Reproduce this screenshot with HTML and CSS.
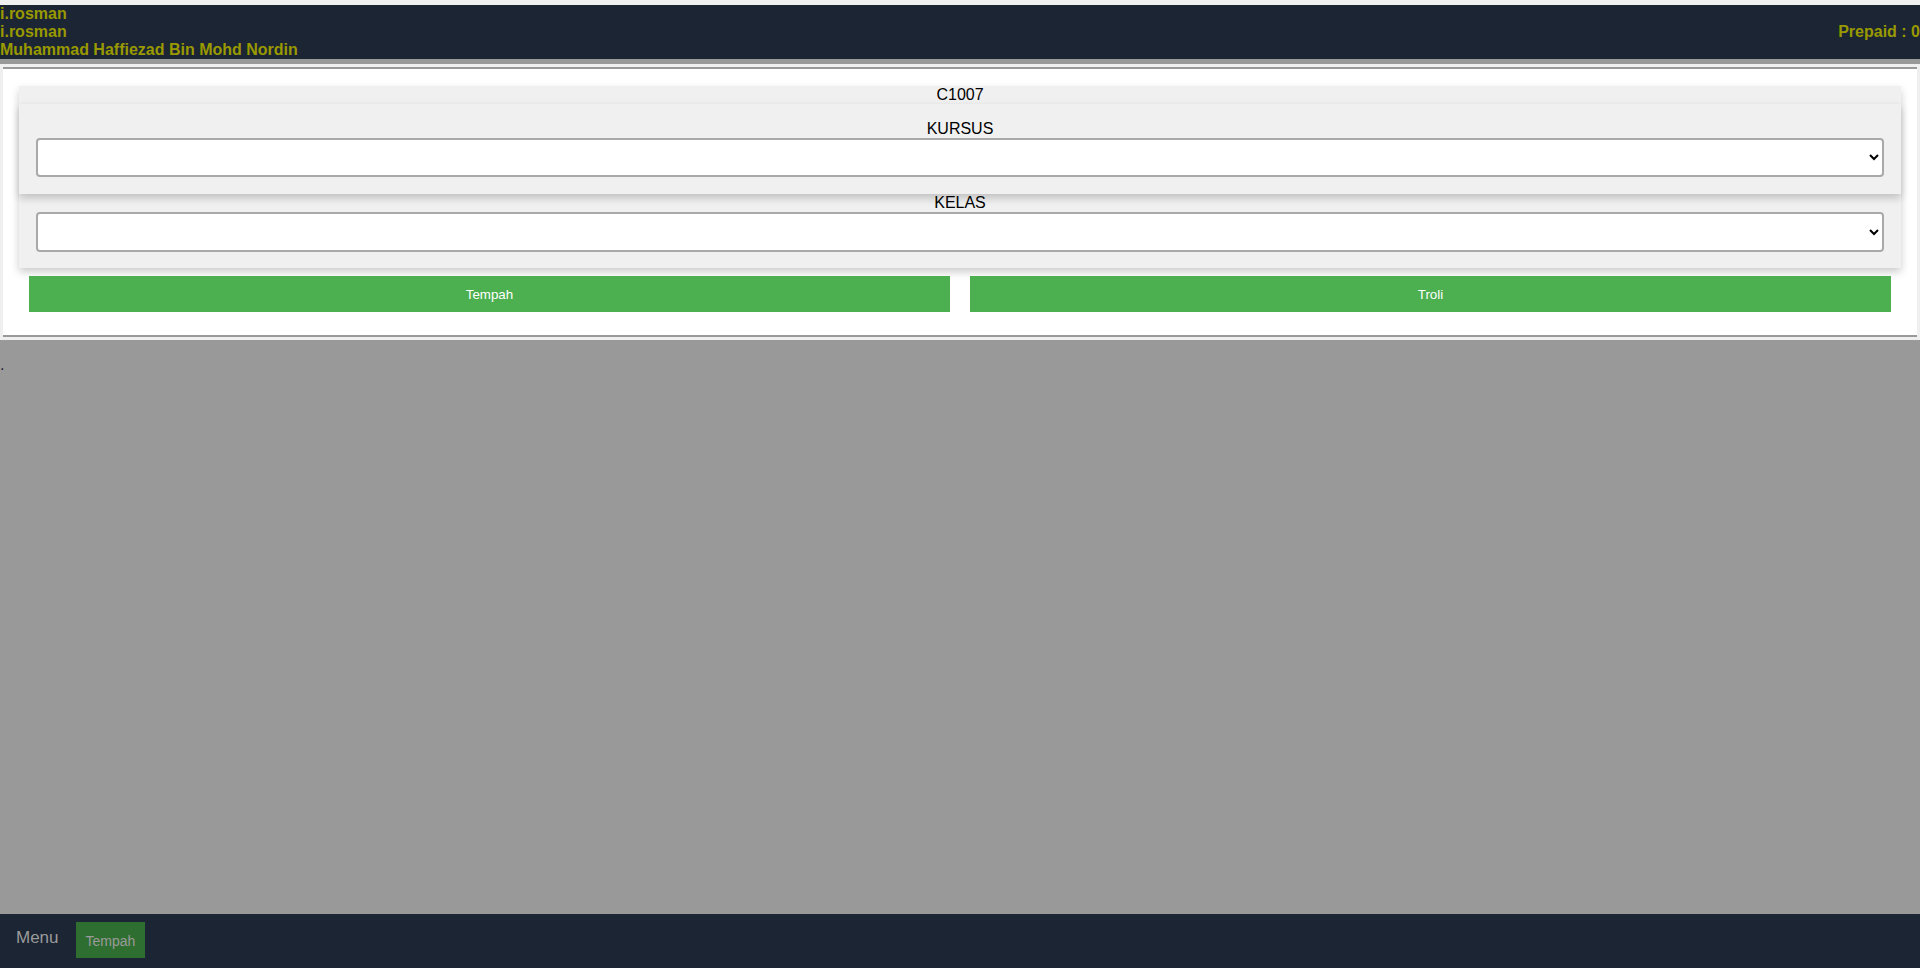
FILE: index.html
```
<!DOCTYPE html>
<html lang="ms">
<head>
    <meta charset="UTF-8">
    <title>Tempah</title>
    <link rel="stylesheet" href="styles.css">
</head>
<body>
<div class="header">
    <div class="user">
        <div>i.rosman</div>
        <div>i.rosman</div>
        <div>Muhammad Haffiezad Bin Mohd Nordin</div>
    </div>
    <div class="prepaid">Prepaid : 0</div>
</div>

<div class="panel">
    <div class="box">
        <div class="card">
            <div class="card-title">C1007</div>
            <div class="field field-first">
                <label for="kursus">KURSUS</label>
                <select id="kursus" class="picker">
                    <option value=""></option>
                </select>
            </div>
            <div class="field">
                <label for="kelas">KELAS</label>
                <select id="kelas" class="picker">
                    <option value=""></option>
                </select>
            </div>
        </div>
        <div class="actions">
            <div class="col"><button class="btn">Tempah</button></div>
            <div class="col"><button class="btn">Troli</button></div>
        </div>
    </div>
</div>

<p class="dot">.</p>

<div class="footer">
    <span class="menu">Menu</span>
    <a class="tab" href="#">Tempah</a>
</div>
</body>
</html>
```

FILE: styles.css
```
* {
    box-sizing: border-box;
}

html, body {
    margin: 0;
    padding: 0;
}

body {
    background-color: #999999;
    font-family: "Liberation Sans", Arial, sans-serif;
    font-size: 16px;
    color: #000;
    min-height: 968px;
}

.header {
    display: flex;
    justify-content: space-between;
    align-items: center;
    background-color: #1c2533;
    border-top: 5px solid #f0f0f0;
    color: #999900;
    font-weight: bold;
    font-size: 16px;
    line-height: 18px;
}

.panel {
    margin-top: 5px;
    padding: 3px;
    background-color: #efefef;
}

.panel .box {
    background-color: #fff;
    border-top: 2px solid #999;
    border-bottom: 2px solid #999;
    padding: 17px 16px 23px;
}

.card {
    background-color: #f0f0f0;
    box-shadow: 0 4px 8px 0 rgba(0, 0, 0, 0.2);
}

.card .card-title {
    text-align: center;
    line-height: 18px;
}

.card .field {
    padding: 0 17px 16px;
}

.card .field-first {
    padding-top: 16px;
    padding-bottom: 17px;
    box-shadow: 0 4px 8px 0 rgba(0, 0, 0, 0.2);
}

.card .field label {
    display: block;
    text-align: center;
    line-height: 18px;
}

.card .picker {
    display: block;
    width: 100%;
    height: 40px;
    border: 2px solid #a9a9a9;
    border-radius: 4px;
    background-color: #fff;
    font-family: "Liberation Sans", Arial, sans-serif;
    font-size: 16px;
}

.card .field-first .picker {
    height: 39px;
}

.actions {
    display: flex;
    margin-top: 8px;
}

.actions .col {
    flex: 1;
    padding: 0 10px;
}

.actions .btn {
    display: block;
    width: 100%;
    height: 36px;
    border: 0;
    background-color: #4caf50;
    color: #fff;
    font-family: "Liberation Sans", Arial, sans-serif;
    font-size: 13.333px;
    cursor: pointer;
}

.dot {
    margin: 16px 0 0;
    color: #1c2533;
    line-height: 18px;
}

.footer {
    position: fixed;
    left: 0;
    right: 0;
    bottom: 0;
    height: 54px;
    display: flex;
    align-items: center;
    padding: 8px 16px 10px;
    background-color: #1c2533;
}

.footer .menu {
    color: #9a9a9a;
    font-size: 17px;
    margin-right: 17px;
    margin-top: -4px;
}

.footer .tab {
    display: block;
    height: 36px;
    line-height: 38px;
    padding: 0 10px;
    background-color: #2f6e31;
    color: #9a9a9a;
    font-size: 14px;
    text-decoration: none;
}
```
